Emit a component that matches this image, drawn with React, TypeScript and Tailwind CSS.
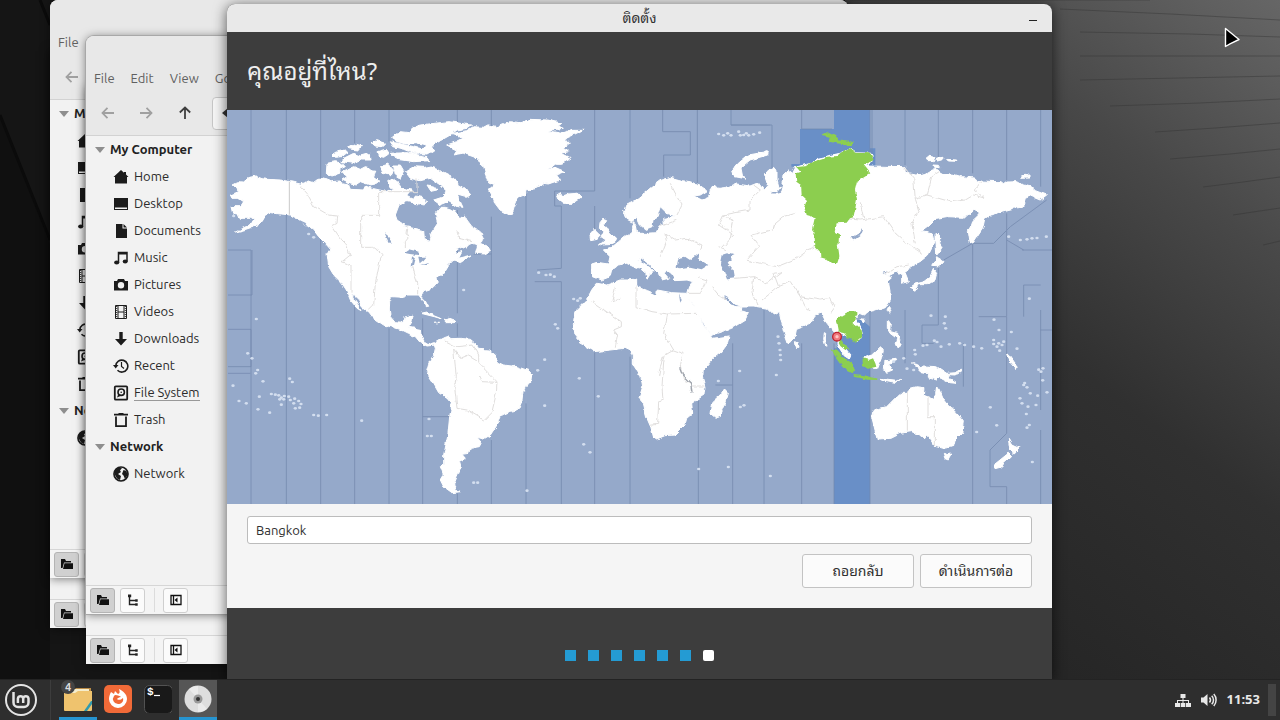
import type { ReactNode } from "react";

type IconName =
  | "home" | "desktop" | "documents" | "music" | "pictures" | "videos"
  | "downloads" | "recent" | "filesystem" | "trash" | "globe";

const PLACES: { label: string; icon: IconName }[] = [
  { label: "Home", icon: "home" },
  { label: "Desktop", icon: "desktop" },
  { label: "Documents", icon: "documents" },
  { label: "Music", icon: "music" },
  { label: "Pictures", icon: "pictures" },
  { label: "Videos", icon: "videos" },
  { label: "Downloads", icon: "downloads" },
  { label: "Recent", icon: "recent" },
  { label: "File System", icon: "filesystem" },
  { label: "Trash", icon: "trash" },
];

const ICONS: Record<IconName, ReactNode> = {
  home: <path d="M8 1 .5 8H2v6.500h12V8h1.500L13 5.600V3h-2v.8z" fill="currentColor" />,
  desktop: (
    <>
      <path d="M1 2h14v9.500H1z" fill="currentColor" />
      <path d="M1 13.500h14M1.500 11v3M14.500 11v3" stroke="currentColor" />
    </>
  ),
  documents: <path d="M3 1h6.500v4.500H14V15H3zM10.500 1 14 4.500h-3.500z" fill="currentColor" />,
  music: (
    <>
      <path d="M5.500 12.500V2.500H14v9" fill="none" stroke="currentColor" strokeWidth="1.500" />
      <path d="M5 2h9v2.500H5z" fill="currentColor" />
      <ellipse cx="3.700" cy="12.500" rx="2.600" ry="2" fill="currentColor" />
      <ellipse cx="12.200" cy="11.500" rx="2.500" ry="2" fill="currentColor" />
    </>
  ),
  pictures: (
    <path fillRule="evenodd" fill="currentColor" d="M5 2h6l1 2h3v9.500H1V4h3zM8 5a3.200 3.200 0 1 0 0 6.400A3.200 3.200 0 0 0 8 5z" />
  ),
  videos: (
    <>
      <path d="M2.500 1.500h11v13h-11zM5 1v14M11 1v14M5 8h6" fill="none" stroke="currentColor" strokeWidth="1" />
      <path d="M3.700 2v12M12.300 2v12" stroke="currentColor" strokeWidth="1" strokeDasharray="1 1" />
    </>
  ),
  downloads: <path d="M6.300 1h3.400v7H14l-6 6.500L2 8h4.300z" fill="currentColor" />,
  recent: (
    <>
      <path d="M2.800 7.800a6 6 0 1 1 1.700 4.500" fill="none" stroke="currentColor" strokeWidth="1.600" />
      <path d="M0 7h5.500L2.700 10.500z" fill="currentColor" />
      <path d="M8.500 4v4.500l2.500 2" fill="none" stroke="currentColor" strokeWidth="1.200" />
    </>
  ),
  filesystem: (
    <>
      <rect x="1.800" y="1.300" width="12.400" height="13.400" rx="1" fill="none" stroke="currentColor" strokeWidth="1.800" />
      <circle cx="8.200" cy="7.200" r="3.200" fill="none" stroke="currentColor" strokeWidth="1.600" />
      <path d="m4 12.500 1.500-4 2 2.500z" fill="currentColor" />
      <circle cx="8.200" cy="7.200" r=".8" fill="currentColor" />
    </>
  ),
  trash: (
    <>
      <path d="M3 4.500v9.700h10V4.500" fill="none" stroke="currentColor" strokeWidth="1.800" />
      <path d="M1 1.800h4L6 1h4l1 .8h4v1.700H1z" fill="currentColor" />
    </>
  ),
  globe: (
    <>
      <circle cx="8" cy="8" r="7" fill="none" stroke="currentColor" strokeWidth="1.700" />
      <path d="M2 4 6 1.500 9 2 7 4.500l1 1.500-3 2 3 2-1 4-3-1.500L2 9zM10.500 4l3 1 1 4-2.500 4-1.500-3.500L9 8z" fill="currentColor" />
    </>
  ),
};

function PlaceIcon({ name }: { name: IconName }) {
  return <svg viewBox="0 0 16 16" className="size-4 shrink-0 text-[#1c1c1c]" aria-hidden="true">{ICONS[name]}</svg>;
}

function Arrow({ rotate, className }: { rotate: number; className: string }) {
  return (
    <svg viewBox="0 0 14 14" className={className} fill="none" stroke="currentColor" strokeWidth="1.800" aria-hidden="true">
      <g transform={`rotate(${rotate} 7 7)`}><path d="M13 7H1.500M6.500 1.800 1.500 7l5 5.200" /></g>
    </svg>
  );
}

function SideHeading({ children }: { children: ReactNode }) {
  return (
    <h3 className="flex h-[27px] items-center gap-1 pl-2 text-[13px] font-bold text-[#222]">
      <svg viewBox="0 0 12 8" className="h-2 w-3" aria-hidden="true"><path d="M1 1h10L6 7z" fill="#8e8e8e" /></svg>
      {children}
    </h3>
  );
}

function StatusBar() {
  const toolButton = "flex size-[25px] items-center justify-center rounded-[3px] border border-[#cfcfcf] bg-[#fbfbfb]";
  return (
    <div className="flex h-[29px] shrink-0 items-center gap-[5px] border-t border-[#d6d6d6] bg-[#f4f4f4] pl-1">
      <button type="button" aria-label="Places" className="flex size-[25px] items-center justify-center rounded-[3px] border border-[#b4b4b4] bg-[#d0d0d0]">
        <svg viewBox="0 0 14 12" className="h-3 w-3.5" aria-hidden="true"><path d="M1 1h4l1 2h5v1.500H4L2.500 10H1zM4.500 5.300H13V11H3z" fill="#111" /></svg>
      </button>
      <button type="button" aria-label="Tree" className={toolButton}>
        <svg viewBox="0 0 12 12" className="size-3" aria-hidden="true"><path d="M2.500 2v8.500H9M2.500 6.500H9" fill="none" stroke="#222" strokeWidth="1.400" /><path d="M1 .5h3.200v2.700H1zM8.300 5.300h2.400v2.400H8.300zM8.300 9.300h2.400v2.400H8.300z" fill="#222" /></svg>
      </button>
      <span className="mr-[3px] ml-1 h-6 w-px bg-[#dcdcdc]" />
      <button type="button" aria-label="Hide sidebar" className={toolButton}>
        <svg viewBox="0 0 12 12" className="size-3" aria-hidden="true"><path d="M1 1.500h10v9H1zM3.500 1v10" fill="none" stroke="#111" strokeWidth="1.300" /><path d="M7.500 3.500v5L4.500 6z" fill="#111" /></svg>
      </button>
    </div>
  );
}

const FRAME = "absolute flex h-[578px] w-[798px] flex-col overflow-hidden bg-[#f2f2f2] shadow-[0_1px_10px_rgba(0,0,0,0.5)]";

function BuriedWindow({ place }: { place: string }) {
  return (
    <section aria-label="Files" className={`${FRAME} ${place}`}>
      <div className="flex-1" />
      <StatusBar />
    </section>
  );
}

function FileManager({ place, compact = false }: { place: string; compact?: boolean }) {
  return (
    <section aria-label="Files" className={`${FRAME} rounded-t-lg ${place}`}>
      <div className="flex h-[100px] shrink-0 flex-col border-b border-[#d2d2d2] bg-[#e8e8e8] pt-7">
        <nav className="flex h-[29px] items-center text-[13px] text-[#606060]">
          {(compact ? ["File"] : ["File", "Edit", "View", "Go"]).map((m) => <button key={m} type="button" className="px-2">{m}</button>)}
        </nav>
        <div className="flex h-10 items-center pl-[15px]">
          <button type="button" aria-label="Back" className="mr-6"><Arrow rotate={0} className="size-3.5 text-[#a0a0a0]" /></button>
          <button type="button" aria-label="Forward" className="mr-[25px]"><Arrow rotate={180} className="size-3.5 text-[#a0a0a0]" /></button>
          <button type="button" aria-label="Up" className="mr-5"><Arrow rotate={90} className="size-3.5 text-[#3f3f3f]" /></button>
          <div className="flex h-[33px] w-60 items-center rounded border border-[#c6c6c6] bg-[#f6f6f6] pl-2">
            <svg viewBox="0 0 8 12" className="h-3 w-2" aria-hidden="true"><path d="M7 1v10L1 6z" fill="#333" /></svg>
          </div>
        </div>
      </div>
      <div className="min-h-0 flex-1">
        <SideHeading>{compact ? "My" : "My Computer"}</SideHeading>
        <ul className="text-[13px] text-[#2b2b2b]">
          {PLACES.map((p) => (
            <li key={p.label} className="flex h-[27px] items-center gap-[5px] pl-[27px]">
              <PlaceIcon name={p.icon} />
              {!compact && <span className={p.icon === "filesystem" ? "border-b border-[#999] leading-4" : ""}>{p.label}</span>}
            </li>
          ))}
        </ul>
        <SideHeading>{compact ? "Ne" : "Network"}</SideHeading>
        <div className="flex h-[27px] items-center gap-[5px] pl-[27px] text-[13px] text-[#2b2b2b]"><PlaceIcon name="globe" />{!compact && "Network"}</div>
      </div>
      <StatusBar />
    </section>
  );
}

/* Map units are thirds of a pixel; each sheet of outlines has its own origin. */
type Sheet = { at: string; land: string[] };

const SHEETS: Sheet[] = [
  {
    at: "translate(0 0)",
    land: [
      "15 225 35 215 50 216 65 203 85 198 105 206 120 208 160 210 190 215 220 222 245 213 262 218 275 208 290 207 310 215 335 213 350 222 365 225 370 238 410 240 420 230 440 236 480 245 500 235 498 220 515 222 525 235 555 240 540 258 560 268 565 255 585 260 600 275 592 285 565 280 540 275 515 288 505 315 510 330 525 340 535 350 560 355 590 362 592 385 605 392 615 385 612 370 632 340 625 310 640 292 655 292 680 300 700 325 712 315 720 330 735 350 760 365 770 385 763 400 780 408 790 425 770 432 745 430 752 405 735 400 715 408 690 420 680 430 705 425 695 445 735 435 720 445 700 458 680 450 660 470 645 495 630 500 632 515 620 530 605 540 590 545 582 560 595 573 605 592 598 593 585 568 575 555 545 555 530 562 495 560 488 575 487 600 490 620 505 638 528 640 535 620 558 615 555 635 545 652 580 658 582 680 592 698 610 702 620 698 625 705 600 708 580 698 565 680 545 670 525 660 500 652 470 645 440 625 425 605 405 590 395 570 372 548 385 575 402 602 390 595 370 570 358 540 345 520 320 495 305 470 300 430 312 420 295 400 275 380 260 360 235 345 215 328 190 315 160 312 130 308 115 318 105 335 80 350 50 360 25 366 60 350 85 330 70 325 40 325 35 313 20 310 15 290 40 290 50 275 35 265 15 265 10 255 35 245 33 235",
      "300 160 325 155 345 160 355 170 338 178 340 190 315 198 298 190",
      "345 185 380 170 400 178 415 170 432 175 445 190 440 200 458 212 445 222 430 225 400 215 385 225 370 222 345 210 360 200",
      "315 132 330 122 350 118 360 128 345 140 325 142", "350 145 380 130 400 138 430 130 432 150 400 150 380 160 345 155",
      "360 115 385 103 405 108 395 120 375 118", "432 98 450 92 475 100 465 110 445 108", "450 125 475 118 485 132 470 142 455 138",
      "460 170 485 162 500 178 490 195 468 190", "482 215 500 205 515 215 510 232 490 232", "500 165 520 165 530 182 520 205 505 195",
      "490 130 540 128 600 140 608 152 560 155 510 148", "490 95 515 100 560 110 590 118 610 105 620 120 600 132 560 130 530 118 500 110",
      "495 85 520 65 545 68 555 52 580 45 640 38 669 35 700 40 734 45 720 55 690 60 670 75 640 92 620 105 609 128 580 120 600 105 570 98 540 102 510 95",
      "535 185 560 170 590 172 610 168 630 175 650 190 680 205 690 220 715 235 728 255 715 262 690 255 700 275 708 292 690 290 665 275 640 285 620 270 645 262 660 245 640 225 610 205 580 212 550 205", "600 225 620 228 630 240 612 244",
    ],
  },
  {
    at: "translate(609 0)",
    land: [
      "50 105 80 95 100 85 60 72 110 62 130 50 160 52 175 44 200 50 215 42 240 35 270 38 300 28 350 30 395 40 385 48 400 55 350 62 395 70 430 58 460 58 440 70 405 85 418 100 400 115 415 125 395 130 425 145 395 160 380 160 350 180 375 172 405 185 380 195 390 210 355 222 340 220 320 235 290 240 290 252 265 262 252 295 245 318 225 308 210 300 195 280 190 265 178 240 195 225 175 215 170 205 160 165 130 140 100 130 70 135 80 120",
      "380 255 392 248 398 258 415 252 440 250 453 265 430 280 400 280 385 268",
      "510 338 518 328 530 332 522 345 530 352 540 370 557 385 550 400 520 402 505 408 525 390 510 380 522 368 508 355", "480 375 495 358 507 370 502 388 482 392",
    ],
  },
  {
    at: "translate(0 570)",
    land: [
      "620 130 640 118 652 112 665 108 675 116 700 115 730 118 750 135 755 148 785 150 805 165 808 185 830 195 870 200 905 212 917 225 915 240 895 262 888 275 885 300 872 330 850 334 825 345 810 375 790 405 770 417 750 412 765 430 760 440 730 445 725 460 705 463 715 475 695 485 700 505 690 530 680 555 690 570 702 575 675 578 650 560 640 540 648 520 640 500 650 490 650 465 655 440 662 410 668 350 675 310 660 292 635 275 615 240 598 215 605 190 622 160 625 145",
      "582 40 600 36 640 52 642 56 622 50", "650 62 665 55 685 62 680 68 655 68", "622 66 635 67 625 69",
    ],
  },
  {
    at: "translate(939 480)",
    land: [
      "172 40 200 45 240 30 265 30 290 27 290 50 320 62 350 75 352 60 395 68 438 70 450 95 470 120 490 165 515 195 518 205 567 198 560 225 545 245 520 265 490 300 488 325 495 350 492 375 455 400 458 430 440 445 435 465 405 495 375 497 350 507 340 500 333 470 320 440 310 400 297 385 308 350 303 320 280 285 280 255 270 242 255 235 210 240 165 245 130 225 105 195 100 160 105 125 140 90 155 60",
      "555 355 562 370 552 405 540 435 525 442 513 432 518 395 540 375",
      "763 215 775 218 777 232 766 232",
    ],
  },
  {
    at: "translate(0 0)",
    land: [
      "1094 462 1110 457 1144 462 1149 440 1129 420 1154 412 1175 395 1195 378 1215 372 1214 345 1220 335 1228 350 1232 370 1255 370 1290 368 1300 350 1312 345 1310 325 1345 318 1320 310 1300 290 1290 320 1278 330 1275 350 1255 358 1240 345 1230 322 1214 335 1200 328 1192 305 1200 285 1220 275 1240 260 1269 235 1299 212 1330 202 1369 212 1389 215 1429 230 1441 242 1420 255 1400 258 1425 270 1445 262 1450 240 1465 228 1475 238 1499 235 1529 222 1569 228 1594 218 1609 240 1622 225 1612 195 1625 180 1640 172 1650 185 1650 210 1656 235 1664 230 1668 195 1684 180 1697 190 1706 172 1754 160 1769 145 1839 130 1870 117 1885 128 1935 130 1935 155 1920 168 2034 170 2039 190 2064 195 2085 193 2100 188 2110 182 2129 178 2149 190 2180 193 2204 200 2249 205 2254 213 2319 215 2328 222 2340 213 2369 212 2390 225 2415 232 2425 242 2459 255 2439 270 2410 258 2395 265 2387 292 2359 295 2319 305 2300 314 2289 315 2274 325 2269 350 2239 395 2229 398 2224 365 2234 335 2260 310 2239 300 2214 322 2159 320 2129 325 2104 350 2084 365 2119 372 2124 395 2104 435 2079 455 2064 462 2044 475 2034 490 2044 515 2024 520 2024 495 2009 485 1984 498 1975 492 1985 480 1964 490 1994 503 1984 512 1989 540 1989 570 1975 590 1940 602 1925 605 1912 615 1900 610 1885 625 1900 655 1904 680 1890 692 1862 680 1840 668 1834 690 1855 715 1872 735 1868 745 1845 730 1830 705 1829 675 1812 655 1800 640 1789 625 1779 610 1764 615 1749 640 1709 655 1704 680 1684 702 1669 660 1657 605 1639 615 1619 595 1580 588 1544 588 1520 580 1504 565 1487 555 1495 570 1512 585 1530 590 1545 590 1540 602 1564 610 1554 630 1514 655 1454 675 1439 655 1419 620 1399 585 1379 560 1379 550 1385 530 1397 515 1380 510 1344 512 1335 492 1319 480 1312 490 1325 505 1304 510 1294 490 1274 470 1244 445 1232 448 1265 470 1284 485 1269 490 1260 505 1256 490 1239 475 1219 470 1199 460 1174 465 1154 480 1149 500 1124 510 1099 500 1094 480",
      "1514 185 1534 160 1564 135 1604 128 1624 125 1622 135 1569 150 1539 175 1544 200 1560 207 1524 200",
    ],
  },
  {
    at: "translate(1839 0)",
    land: [
      "288 370 298 378 300 400 306 412 295 430 290 435 288 400", "290 440 312 455 300 468 278 466 285 455", "280 478 290 490 285 510 262 524 235 524 220 546 211 532 225 522 250 516 270 500",
      "258 148 270 138 285 142 280 152 262 152", "290 144 312 142 308 150 290 153", "320 148 350 150 350 154 325 153", "545 197 570 195 570 201 545 202", "275 165 295 166 299 173 285 172",
    ],
  },
  {
    at: "translate(1689 540)",
    land: [
      "250 360 290 350 310 330 330 310 350 310 362 295 380 290 402 293 400 315 430 328 437 310 440 288 450 300 460 325 480 350 500 370 520 395 515 430 495 450 490 470 460 475 435 468 425 455 410 435 400 447 390 435 365 425 330 430 300 445 262 447 255 420 245 380",
      "460 490 473 494 485 492 475 510 465 506", "655 448 665 465 680 472 690 470 672 490 660 480", "655 490 665 500 645 518 630 532 612 537 615 522",
      "368 218 385 222 390 235 400 228 440 230 470 250 478 265 498 280 480 278 450 262 440 270 415 262 415 250 390 245 385 232",
      "220 203 245 195 270 172 280 182 275 205 262 238 250 235", "285 212 318 208 320 212 296 220 308 240 290 247 283 235",
      "292 95 304 102 302 125 320 130 330 150 335 165 322 175 315 160 320 145 300 130 292 115", "297 48 302 55 296 70 291 60", "213 86 226 88 220 99", "470 250 495 248 512 238 515 243 495 255 475 254", "653 192 658 195 672 215 685 232 678 235 660 213", "270 268 320 274 332 268 315 280 280 273", "103 128 107 130 106 150 112 168 108 168 101 145",
    ],
  },
];

const GREEN = [
  "1709 172 1740 168 1754 158 1769 150 1800 140 1830 138 1839 130 1870 117 1885 128 1930 130 1940 150 1925 158 1910 165 1930 190 1890 215 1884 240 1890 268 1884 300 1879 322 1869 325 1859 338 1829 340 1823 365 1839 375 1838 395 1829 402 1834 440 1827 462 1815 462 1800 448 1780 442 1779 425 1765 410 1762 370 1755 360 1763 325 1739 318 1732 290 1740 270 1724 255 1722 225 1708 215 1706 190 1720 185",
  "1784 75 1804 65 1824 75 1835 88 1862 92 1882 98 1869 108 1825 98 1805 95 1808 80",
  "1829 628 1845 615 1869 603 1885 603 1892 612 1883 625 1880 640 1901 658 1904 680 1886 695 1862 685 1852 670 1832 665 1838 685 1857 708 1868 718 1855 720 1840 708 1830 690 1835 660",
  "1814 718 1830 722 1845 738 1878 762 1884 785 1880 793 1860 783 1844 765 1822 735", "1880 795 1925 800 1952 806 1950 810 1920 809 1880 800",
  "1906 745 1925 750 1938 745 1945 760 1948 770 1924 776 1908 768",
];

const SEAS = [
  "1349 470 1354 445 1374 440 1389 450 1414 430 1412 445 1444 465 1424 478 1389 470 1359 475",
  "1479 460 1484 435 1500 430 1519 435 1514 445 1502 458 1520 480 1524 505 1500 508 1489 480",
  "530 428 545 418 575 425 572 435 548 432", "555 440 565 438 558 465 551 470", "574 440 598 440 590 450 578 460", "580 464 605 456 602 463", "475 370 482 374 494 398 487 398",
  "1871 385 1898 370 1906 355 1908 360 1902 375 1880 391", "1356 550 1364 570 1360 578",
  "1632 245 1650 250 1665 232 1655 220 1668 225 1662 248 1640 254", "212 328 235 338 248 354 238 348",
];

const BORDERS = "M217 225L240 250 262 290 305 315 332 318 330 340 315 348 340 385 355 400 370 435 345 455 372 465V545M455 245H570V205M455 245V316H401V412H440L465 430 455 470 445 520 440 585 425 600M540 350L537 370 545 382 535 395 535 415M557 470L565 500 572 520V553M690 360L695 385 735 395M650 690L690 710 740 705 755 735 755 760 810 815 808 850 795 905 770 930 720 900 690 895 683 830 688 800 680 720 700 745 725 735 750 750M757 798L765 815 810 817M1094 575L1183 635V650L1160 660 1172 675 1165 710M1227 530V590L1275 605 1322 612 1408 610M1322 612L1310 670 1340 720 1315 735 1310 755 1305 830 1308 870 1295 875 1292 940 1270 943M1340 720L1368 730 1360 770 1370 810 1392 820 1395 845M1392 828H1432M1310 740L1300 770 1295 795M1180 565L1155 575 1165 530M1314 370L1345 390 1380 385 1425 405 1420 420M1314 370L1318 395 1300 440M1300 350L1350 330M1330 220L1355 270 1365 285 1350 315M1569 300V270L1600 240 1580 225M1569 300L1489 315 1475 345 1520 375 1480 420M1489 315L1520 330 1510 385M1706 310L1670 320 1640 345 1635 360 1572 375 1595 410 1560 450 1600 460 1650 470 1700 450 1740 420 1765 410M1500 420L1475 410M1524 505L1580 500 1620 520 1665 485M1580 500L1575 550 1590 585M1665 485L1640 490 1655 530 1605 570M1655 530L1690 515 1720 560 1780 570 1810 565 1825 590 1810 610M1720 560L1735 590 1750 600M1454 530L1475 555 1500 570M1410 500L1440 510 1420 550 1385 550M1839 300L1845 325 1900 330 1970 320 2005 370 2040 400 2070 420 2085 430M1900 280L1910 325M2030 170L2060 205 2065 270 2075 300 2055 340 2065 400M2065 265L2100 255 2170 275 2215 270 2240 255 2275 265M2100 255L2115 200 2140 185M2275 265L2240 240 2265 215M1975 490L2010 470 2045 465M2041 845V965M2103 860V920H2125V1010";

const ZONE_LINES = [
  "M72 0V198M72 420V1182M3 420H72M3 555H75V420M3 658H72V770H3M3 790H70", "M178 0V210M178 312V1182", "M281 0V208M281 385V1182", "M383 0V100M383 590V1182", "M486 0V95M486 655V1182",
  "M587 625V1182M587 920H670", "M691 0V60M691 300V610M691 640V680M691 1150V1182", "M793 0V60M793 320V720M793 990V1182M740 432H793", "M897 250V780M897 880V1182",
  "M1103 0V243H983V288H1003V475M923 515H1003V1182M930 480L1003 475M1103 288V380M1103 725V1182", "M1209 0V265M1209 740V1182", "M1307 0V65H1390V135H1310V200M1411 0V230", "M1512 0V45H1635V175M1512 45H1630", "M1724 0V57H1815",
  "M1414 850V1182", "M1517 700V1182M1465 825H1517", "M1611 600V1182", "M1724 700V1182", "M1821 700V1182M1929 0V1182", "M1935 0V160M2134 0V145M2134 440V645H2085V700H2120", "M2237 0V190M2237 400V1182", "M2339 0V210M2339 310V620H2255M2339 620V970L2289 1020V1130H2339V1182", "M2441 0V230M2390 525H2441M2390 525V620M2441 600V900M2441 660H2475M2441 960V1182M2034 600V760M2209 700V830M2150 450L2237 400 2300 400 2350 350 2459 270M2385 420H2475M2034 0V165M2339 390L2390 420",
];

const SPECKS: [number, number][] = [
  [88, 627], [62, 730], [75, 745], [92, 780], [86, 790], [108, 814], [188, 806], [196, 816], [18, 827], [36, 873], [58, 880], [97, 860], [93, 898], [128, 908], [133, 852], [145, 854], [155, 856], [163, 863], [172, 858], [158, 868], [170, 868], [185, 860], [190, 870], [203, 866], [200, 880], [215, 873], [222, 882], [205, 895], [218, 893], [163, 884], [260, 915], [274, 917], [299, 915], [404, 932], [606, 927], [601, 978], [613, 978], [953, 749], [932, 781], [953, 887], [710, 540], [935, 488], [957, 495], [970, 494], [982, 500], [1040, 567], [1052, 572], [1060, 565], [985, 643], [992, 655], [1057, 805], [1114, 859], [1070, 1003], [1089, 1027], [1415, 1077], [1504, 1071], [1540, 891], [1551, 886], [1474, 813], [1538, 783], [1653, 680], [1656, 700], [1659, 720], [1660, 735], [1661, 750], [1648, 795], [1630, 1098], [900, 1142], [740, 1118], [752, 1118], [2249, 966], [2309, 946], [2416, 1056], [2290, 892], [2407, 566], [2301, 629], [2316, 660], [2300, 690], [2315, 700], [2330, 695], [2310, 710], [2325, 705], [2318, 722], [2300, 702], [2353, 666], [2370, 716], [2435, 779], [2442, 785], [2448, 775], [2393, 819], [2400, 832], [2379, 865], [2385, 880], [2403, 890], [2427, 885], [2432, 857], [2410, 850], [2398, 912], [2447, 811], [2460, 847], [2390, 825], [2155, 620], [2152, 640], [2156, 655], [2112, 617], [2088, 707], [2100, 705], [2122, 692], [2130, 696], [2142, 710], [2167, 703], [2063, 720], [2065, 733], [2198, 700], [2213, 705], [2240, 710], [2264, 715], [2000, 755], [2030, 745], [2040, 776], [2060, 780], [2345, 380], [2380, 390], [2400, 388], [2415, 385], [2430, 384], [2458, 380], [1475, 72], [1490, 76], [1502, 70], [1512, 76], [1535, 65], [1540, 76], [1550, 75], [1558, 70], [1565, 76], [1580, 73], [1598, 68], [245, 372], [260, 382], [20, 318], [2400, 953], [2407, 945],
];

function WorldMap() {
  return (
    <svg viewBox="0 0 2475 1182" className="block h-auto w-full shrink-0 bg-[#95a9ca]" role="img" aria-label="World time zones">
      <defs>
        <filter id="coast" x="0" y="0" width="1" height="1" filterUnits="objectBoundingBox">
          <feTurbulence type="fractalNoise" baseFrequency="0.045" numOctaves="3" seed="4" />
          <feDisplacementMap in="SourceGraphic" scale="13" xChannelSelector="R" yChannelSelector="G" />
        </filter>
      </defs>
      <path d="M1719 57H1821V0H1929V115H1945V170H1693V162H1719zM1821 715H1929V1182H1821zM1829 630H1905L1929 650V718H1829z" fill="#698fc7" />
      <g fill="none" stroke="#7388ad" strokeWidth="3" opacity=".75">{ZONE_LINES.map((d) => <path key={d} d={d} />)}</g>
      <g filter="url(#coast)">
        <path d="M0 0H2475V1182H0z" fill="none" />
        <g fill="#ffffff" stroke="#ffffff" strokeWidth="3" strokeLinejoin="round">
          {SHEETS.map((s, i) => (
            <g key={i} transform={s.at}>{s.land.map((p) => <polygon key={p} points={p} />)}</g>
          ))}
        </g>
        <g fill="#95a9ca">{SEAS.map((p) => <polygon key={p} points={p} />)}</g>
        <path d={BORDERS} fill="none" stroke="#e0dedd" strokeWidth="3" />
        <path d="M1358 775l8 20 25 25 4 28" fill="none" stroke="#9da3ac" strokeWidth="4" />
        <g fill="#8cce50">{GREEN.map((p) => <polygon key={p} points={p} />)}</g>
      </g>
      <path d="M187 215V314" stroke="#c9c9c9" strokeWidth="3" />
      <g fill="#d3deef">{SPECKS.map(([x, y]) => <ellipse key={`${x}-${y}`} cx={x} cy={y} rx="5" ry="4" />)}</g>
      <circle cx="1830" cy="680" r="13" fill="#f0787c" stroke="#bf2430" strokeWidth="4" />
      <circle cx="1830" cy="680" r="5" fill="#ffc5c5" />
    </svg>
  );
}

function Installer() {
  const thai = "font-['Noto_Sans','Noto_Sans_Thai_Looped','Loma','Waree','Garuda',sans-serif]";
  const action = `h-[34px] w-28 rounded-[3px] border border-[#c3c3c3] bg-[#fbfbfb] text-sm text-[#303030] ${thai}`;
  return (
    <section aria-labelledby="installer-title" className="absolute top-1 bottom-px left-[227px] flex w-[825px] flex-col overflow-hidden rounded-t-lg bg-[#3d3d3d] shadow-[0_2px_14px_rgba(0,0,0,0.65)]">
      <header className={`relative flex h-7 shrink-0 items-center justify-center bg-[#e9e9e9] text-sm text-[#333] ${thai}`}>
        <h1 id="installer-title">ติดตั้ง</h1>
        <button type="button" aria-label="Minimize" className="absolute right-[11px] flex size-4 items-center justify-center"><span className="mt-1 h-px w-2 bg-[#222]" /></button>
      </header>
      <h2 className={`flex h-[78px] shrink-0 items-center px-5 text-2xl text-[#eeeeee] ${thai}`}>คุณอยู่ที่ไหน?</h2>
      <WorldMap />
      <form className="flex h-[104px] shrink-0 flex-col gap-2.5 bg-[#f5f5f5] px-5 pt-3" onSubmit={(e) => e.preventDefault()}>
        <input aria-label="Location" defaultValue="Bangkok" className="h-7 w-full rounded-[3px] border border-[#bcbcbc] bg-white px-2 text-[13px] text-[#303030]" />
        <div className="flex justify-end gap-1.5">
          <button type="button" className={action}>ถอยกลับ</button>
          <button type="submit" className={action}>ดำเนินการต่อ</button>
        </div>
      </form>
      <div className="flex flex-1 items-center justify-center gap-3 pt-6" aria-label="Step 7 of 7">
        {[0, 1, 2, 3, 4, 5, 6].map((n) => <span key={n} className={n < 6 ? "size-[11px] bg-[#249bd3]" : "size-[11px] rounded-xs bg-white"} />)}
      </div>
    </section>
  );
}

function Wallpaper() {
  return (
    <svg viewBox="0 0 1280 720" preserveAspectRatio="none" className="absolute inset-0 h-full w-full" aria-hidden="true">
      <defs>
        <linearGradient id="wall" x1="1" y1="0" x2="0.550" y2="1">
          <stop offset="0" stopColor="#666666" /><stop offset=".3" stopColor="#484848" /><stop offset=".6" stopColor="#303030" /><stop offset="1" stopColor="#252525" />
        </linearGradient>
      </defs>
      <path d="M0 0h1280v720H0z" fill="#151515" />
      <path d="M845 0h435v720H845z" fill="url(#wall)" />
      <path d="M0 115 50 245V680H0z" fill="#101010" />
      <path d="M0 115 50 240M40 0l10 25" stroke="#0b0b0b" strokeWidth="3" />
      <path d="M850 0h300M1060 9l110 5 110 6M1080 32l110 2 90 3M1080 56h200M1080 80l100-2 100-2M1110 106l90-3 80-4M1155 132l60-4 65-5M1170 159l60-5 50-5M1203 187l40-5 37-5M1233 215l47-7M1263 245l17-4M1054 432l24-6" fill="none" stroke="#303030" strokeWidth="1" opacity=".4" />
    </svg>
  );
}

function TaskIcon({ name }: { name: "files" | "firefox" | "terminal" | "disc" }) {
  const art = {
    files: (
      <>
        <path d="M1 5h9l2-2h15v7H1z" fill="#b98a45" /><path d="M4 4h21v8H4z" fill="#f5edcc" />
        <path d="M0 8h11l3-2h14v19a1 1 0 0 1-1 1H1a1 1 0 0 1-1-1z" fill="#efc36e" /><path d="m20 26 7-10h1v3l-5 7z" fill="#2f9aae" />
      </>
    ),
    firefox: (
      <>
        <rect width="28" height="28" rx="5" fill="#f16a38" />
        <path d="M7 7l3 2 1-3 3 3c3-1 1-4 1-5 4 2 8 5 8 10a9 9 0 1 1-18 0c0-3 1-5 2-7z" fill="#fff" />
        <path d="M11 10c3 0 5 1 6 2-2 0-3 1-4 2 2 2 5 0 6-1 1 4-2 6-5 6a5 5 0 0 1-4-8z" fill="#f16a38" />
      </>
    ),
    terminal: (
      <>
        <rect x=".5" y=".5" width="28" height="28" rx="5" fill="#191919" stroke="#525252" />
        <path d="M10 10.500h6" stroke="#fff" strokeWidth="1.200" />
      </>
    ),
    disc: (
      <>
        <circle cx="14" cy="14" r="13.500" fill="#dedede" /><path d="M14 14 5 4a13 13 0 0 1 9-3zM14 14l9 10a13 13 0 0 1-9 3z" fill="#ebebeb" />
        <circle cx="14" cy="14" r="4.500" fill="#999" /><circle cx="14" cy="14" r="2" fill="#333" />
      </>
    ),
  }[name];
  return <svg viewBox="0 0 28 28" className="size-7" aria-hidden="true">{art}</svg>;
}

function Panel() {
  const slot = "relative flex h-full w-[38px] items-center justify-center border-b-[3px]";
  return (
    <footer className="relative z-10 flex h-[41px] shrink-0 items-center border-t border-[#232323] bg-[#2e2e2e]">
      <button type="button" aria-label="Menu" className="ml-1">
        <svg viewBox="0 0 34 34" className="size-[34px]" fill="none" stroke="#e4e4e4" aria-hidden="true">
          <circle cx="17" cy="17" r="15" strokeWidth="2" />
          <path d="M9.500 9v10.500a4.500 4.500 0 0 0 4.500 4.500h6a4.500 4.500 0 0 0 4.500-4.500V15.500a2.700 2.700 0 0 0-5.300 0V20M19.200 15.500a2.700 2.700 0 0 0-5.300 0V20" strokeWidth="2.500" />
        </svg>
      </button>
      <span className="ml-3 h-full w-px bg-[#3d3d3d]" />
      <div className="ml-2 flex h-full gap-0.5">
        <button type="button" aria-label="Files" className={`${slot} border-[#2694d0]`}>
          <TaskIcon name="files" />
          <span className="absolute top-0 left-0.5 flex size-3.5 items-center justify-center rounded-full bg-[#444] text-[11px] font-bold text-[#ddd]">4</span>
        </button>
        <button type="button" aria-label="Firefox" className={`${slot} border-transparent`}><TaskIcon name="firefox" /></button>
        <button type="button" aria-label="Terminal" className={`${slot} border-transparent`}>
          <TaskIcon name="terminal" />
          <span className="absolute top-1 left-2 font-['Liberation_Mono',monospace] text-[11px] font-bold text-white">$</span>
        </button>
        <button type="button" aria-label="Installer" className={`${slot} border-[#2694d0] bg-[#565656]`}><TaskIcon name="disc" /></button>
      </div>
      <div className="ml-auto flex h-full items-center text-[#e8e8e8]">
        <svg viewBox="0 0 16 16" className="mr-2.5 size-4" fill="currentColor" aria-label="Network"><path d="M5.500 2h5v4h-5zM0 11h5v4H0zM5.700 11h4.600v4H5.700zM11 11h5v4h-5zM7.500 6h1v2H14v3h-1V9H8.500v2h-1V9H3v2H2V8h5.500z" /></svg>
        <svg viewBox="0 0 16 16" className="mr-2.5 size-4" fill="none" stroke="currentColor" strokeWidth="1.500" aria-label="Volume">
          <path d="M0 5.500h2.500L6.500 2v12l-4-3.500H0z" fill="currentColor" stroke="none" /><path d="M8.500 5.500a4 4 0 0 1 0 5M10.700 3.700a6 6 0 0 1 0 8.600M12.800 2a9 9 0 0 1 0 12" />
        </svg>
        <time className="font-['Noto_Sans',sans-serif] text-[13px] font-bold">11:53</time>
        <span className="mr-1 ml-2 h-8 w-2 bg-[#444]" />
      </div>
    </footer>
  );
}

export default function App() {
  return (
    <div className="relative flex h-screen flex-col overflow-hidden bg-[#151515] font-['Ubuntu','Noto_Sans',sans-serif]">
      <Wallpaper />
      <main className="relative -mb-px flex-1">
        <BuriedWindow place="top-[50px] left-[50px]" />
        <FileManager place="top-0 left-[50px]" compact />
        <BuriedWindow place="top-[86px] left-[86px]" />
        <FileManager place="top-9 left-[86px] ring-1 ring-[#a8a8a8]" />
        <Installer />
      </main>
      <Panel />
      <svg viewBox="0 0 16 22" className="absolute top-[27px] left-[1224px] z-20 h-[22px] w-4" aria-hidden="true">
        <path d="M1.500 1.500v18l4.500-2.700 9-4.300z" fill="#000" stroke="#fff" strokeWidth="1.400" strokeLinejoin="round" />
      </svg>
    </div>
  );
}
